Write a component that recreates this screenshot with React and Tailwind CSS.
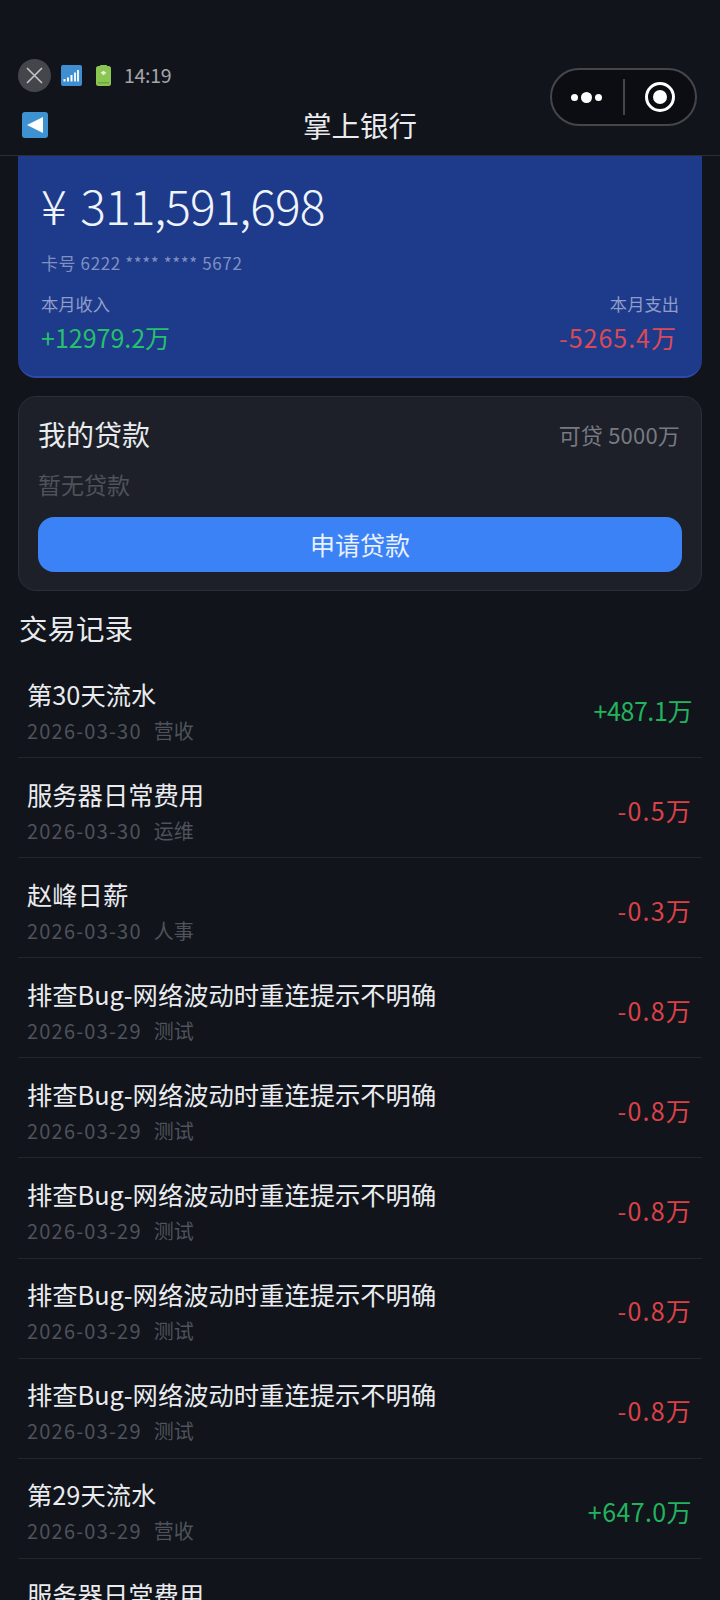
import React from "react";

const font = "[font-family:'Noto_Sans_CJK_SC','Noto_Sans',sans-serif]";

const bug = { title: "排查Bug-网络波动时重连提示不明确", date: "2026-03-29", tag: "测试", amount: "-0.8万" };

const records = [
  { title: "第30天流水", date: "2026-03-30", tag: "营收", amount: "+487.1万", income: true, tight: true },
  { title: "服务器日常费用", date: "2026-03-30", tag: "运维", amount: "-0.5万" },
  { title: "赵峰日薪", date: "2026-03-30", tag: "人事", amount: "-0.3万" },
  bug,
  bug,
  bug,
  bug,
  bug,
  { title: "第29天流水", date: "2026-03-29", tag: "营收", amount: "+647.0万", income: true },
  { title: "服务器日常费用", date: "2026-03-29", tag: "运维", amount: "-0.5万" },
];

function amountClass(item) {
  if (item.tight) return "tracking-[-0.4px] text-[#22b35e]";
  if (item.income) return "tracking-[0.4px] text-[#22b35e]";
  return "tracking-[1.2px] text-[#dc4148]";
}

function SignalIcon() {
  return (
    <svg width="21" height="21" viewBox="0 0 21 21">
      <rect width="21" height="21" rx="2" fill="#3f8fd0" />
      <rect x="2.5" y="14" width="2" height="2.5" fill="#fff" />
      <rect x="6" y="12.5" width="2" height="4" fill="#fff" />
      <rect x="9.5" y="10" width="2" height="6.5" fill="#fff" />
      <rect x="13" y="7.5" width="2" height="9" fill="#e8f2fa" />
      <rect x="16" y="5" width="2" height="11.5" fill="#e8f2fa" />
    </svg>
  );
}

function BatteryIcon() {
  return (
    <svg width="15" height="21" viewBox="0 0 15 21">
      <rect x="4" y="0" width="7" height="2" rx="0.5" fill="#8bc653" />
      <rect x="0" y="1" width="15" height="20" rx="2.5" fill="#8bc653" />
      <rect x="6.5" y="6" width="2" height="4" fill="#e4f3d3" />
      <rect x="5" y="7" width="5" height="1.5" fill="#e4f3d3" />
      <rect x="2" y="17" width="11" height="1.5" fill="#6ea63c" />
    </svg>
  );
}

function Row({ item }) {
  return (
    <div className="flex h-[100.1px] items-center justify-between border-b border-[#23262d] pl-[9px] pr-[10px]">
      <div className="flex flex-col pt-[5px]">
        <div className="text-[25.3px] leading-[36px] text-[#e9ebee]">{item.title}</div>
        <div className="mt-[5px] flex gap-[12px] text-[20px] leading-[28px] text-[#4e525a]">
          <span className="tracking-[1.2px]">{item.date}</span>
          <span>{item.tag}</span>
        </div>
      </div>
      <div className={`pt-[6px] text-[25px] ${amountClass(item)}`}>{item.amount}</div>
    </div>
  );
}

export default function App() {
  return (
    <div className={`h-[1600px] w-[720px] overflow-hidden bg-[#11141b] ${font}`}>
      <header className="h-[156px] border-b border-[#2a2d34] px-[18px] pt-[58px]">
        <div className="flex items-start justify-between">
          <div className="flex h-[34px] items-center">
            <div className="flex h-[33px] w-[33px] items-center justify-center rounded-full bg-[#44464b]">
              <svg width="21" height="21" viewBox="0 0 21 21" stroke="#c4c5c7" strokeWidth="1.6">
                <path d="M3 3 18 18M18 3 3 18" />
              </svg>
            </div>
            <div className="ml-[10px]"><SignalIcon /></div>
            <div className="ml-[14px]"><BatteryIcon /></div>
            <span className="ml-[13px] text-[19.5px] tracking-[-0.3px] text-[#a3a5a9]">14:19</span>
          </div>
          <div className="mr-[5px] mt-[10px] flex h-[58px] w-[147px] items-center rounded-full border-2 border-[#44464c] bg-[#0c0d12]">
            <div className="flex w-[71px] items-center justify-center gap-[3px] pr-[2px]">
              <span className="h-[7px] w-[7px] rounded-full bg-white" />
              <span className="h-[11px] w-[11px] rounded-full bg-white" />
              <span className="h-[7px] w-[7px] rounded-full bg-white" />
            </div>
            <div className="h-[36px] w-[2px] bg-[#44464c]" />
            <div className="flex flex-1 items-center justify-center">
              <div className="flex h-[30px] w-[30px] items-center justify-center rounded-full border-[3px] border-white">
                <span className="h-[14px] w-[14px] rounded-full bg-white" />
              </div>
            </div>
          </div>
        </div>
        <div className="-mt-[22px] flex items-center">
          <svg width="26" height="26" viewBox="0 0 26 26" className="ml-[4px]">
            <rect width="26" height="26" rx="3" fill="#3f92d2" />
            <path d="M5 13 21 5V21Z" fill="#fff" />
          </svg>
          <div className="-ml-[30px] flex-1 text-center text-[28.5px] text-[#e9ebee]">掌上银行</div>
        </div>
      </header>

      <main className="px-[18px]">
        <section className="h-[222px] rounded-b-[18px] border-b-2 border-[#2f4aa5] bg-[#1e3a8a] px-[23px] pt-[15px]">
          <div className="text-[48px] font-light leading-[66px] tracking-[-1px] text-[#eff3fb] [word-spacing:5px]">¥ 311,591,698</div>
          <div className="mt-[14px] text-[17px] leading-[24px] tracking-[0.6px] text-[#7f90c1]">卡号 6222 **** **** 5672</div>
          <div className="mt-[17px] flex justify-between">
            <div>
              <div className="text-[17.3px] leading-[24px] text-[#8e9dc9]">本月收入</div>
              <div className="mt-[5px] text-[25px] leading-[32px] text-[#27c06c]">+12979.2万</div>
            </div>
            <div className="text-right">
              <div className="text-[17.3px] leading-[24px] text-[#8e9dc9]">本月支出</div>
              <div className="mr-[2px] mt-[5px] text-[25px] leading-[32px] tracking-[1px] text-[#d94a58]">-5265.4万</div>
            </div>
          </div>
        </section>

        <section className="mt-[18px] h-[195px] rounded-[18px] border border-[#2b2f37] bg-[#1d2029] px-[19px] pt-[15px]">
          <div className="flex items-center justify-between">
            <span className="text-[28px] leading-[44px] text-[#e9ebee]">我的贷款</span>
            <span className="mr-[2px] text-[22px] tracking-[0.2px] text-[#777a81]">可贷 5000万</span>
          </div>
          <div className="mt-[11px] text-[23px] leading-[34px] text-[#4e525a]">暂无贷款</div>
          <button className="mt-[16px] block h-[55px] w-full rounded-[16px] bg-[#3b82f6] text-[25px] text-[#e9f1fe]">申请贷款</button>
        </section>

        <h2 className="ml-[1px] mt-[15px] text-[28.5px] font-normal leading-[44px] text-[#e9ebee]">交易记录</h2>

        <div className="mt-[8px]">
          {records.map((item, i) => (
            <Row key={i} item={item} />
          ))}
        </div>
      </main>
    </div>
  );
}
